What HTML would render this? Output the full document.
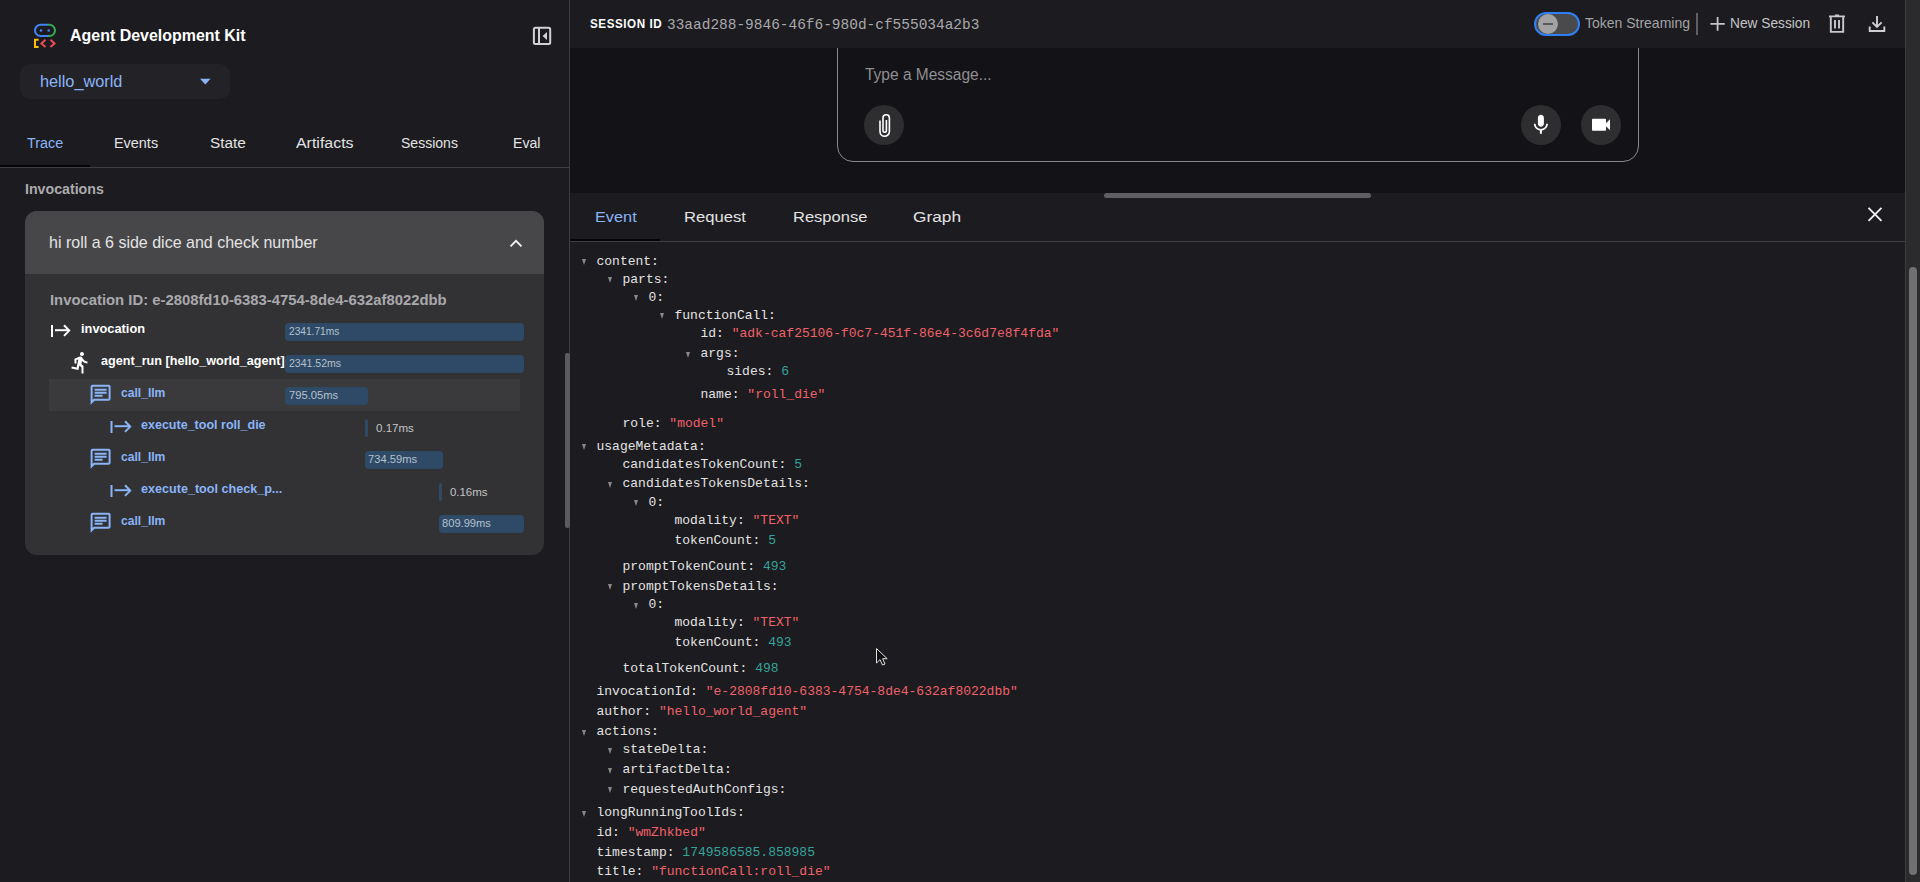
<!DOCTYPE html>
<html><head><meta charset="utf-8">
<style>
*{box-sizing:border-box;margin:0;padding:0}
html,body{width:1920px;height:882px;overflow:hidden;background:#1c1b1f;font-family:"Liberation Sans",sans-serif;color:#e3e3e3}
.a{position:absolute}
.t{position:absolute;white-space:nowrap;line-height:1;transform-origin:0 0}
.jl{font-family:"Liberation Mono",monospace;font-size:13px}
.tri{position:absolute;width:0;height:0;border-left:2.6px solid transparent;border-right:2.6px solid transparent;border-top:6px solid #8a8a8c}
.bar{position:absolute;height:18px;background:#2e4a66;border-radius:4px}
svg{position:absolute;overflow:visible}
</style></head><body>
<!-- sidebar -->
<div class="a" style="left:0;top:0;width:570px;height:882px;background:#1c1b1f"></div>
<div class="a" style="left:569px;top:0;width:1px;height:882px;background:#3c3b40"></div>
<!-- logo -->
<svg style="left:0;top:0" width="60" height="52">
  <defs>
    <clipPath id="lc"><rect x="0" y="0" width="48" height="40"/></clipPath>
    <clipPath id="rc"><rect x="48" y="0" width="20" height="40"/></clipPath>
  </defs>
  <rect x="35" y="24.8" width="20" height="11.2" rx="5.6" fill="none" stroke="#4285f4" stroke-width="2" clip-path="url(#lc)"/>
  <rect x="35" y="24.8" width="20" height="11.2" rx="5.6" fill="none" stroke="#34a853" stroke-width="2" clip-path="url(#rc)"/>
  <circle cx="41" cy="30.5" r="1.3" fill="#4285f4"/>
  <circle cx="48.7" cy="30.5" r="1.3" fill="#4285f4"/>
  <path d="M38.6 39.8H35V47H38.6" fill="none" stroke="#fbbc04" stroke-width="2"/>
  <path d="M45.5 39.8L41.4 43.4L45.5 47" fill="none" stroke="#ea4d55" stroke-width="2"/>
  <path d="M50.4 39.8L54.5 43.4L50.4 47" fill="none" stroke="#ea4d55" stroke-width="2"/>
</svg>
<!-- collapse icon -->
<svg style="left:0;top:0" width="560" height="50">
  <rect x="533.9" y="27.7" width="16.3" height="16.3" rx="1.5" fill="none" stroke="#d2d2d4" stroke-width="2"/>
  <rect x="538" y="27.7" width="2" height="16.3" fill="#d2d2d4"/>
  <path d="M547 32L542.6 36L547 40Z" fill="#d2d2d4"/>
</svg>
<!-- select -->
<div class="a" style="left:20px;top:64px;width:210px;height:35px;background:#232226;border-radius:10px"></div>
<svg style="left:0;top:0" width="230" height="100"><path d="M200 78.8H210.6L205.3 84.4Z" fill="#8ab4f8"/></svg>
<!-- tabs -->
<div class="a" style="left:0;top:167px;width:569px;height:1px;background:#3f3e43"></div>
<div class="a" style="left:0;top:165px;width:90px;height:2px;background:#050505"></div>
<!-- card -->
<div class="a" style="left:25px;top:211px;width:519px;height:344px;background:#323235;border-radius:12px;overflow:hidden">
  <div class="a" style="left:0;top:0;width:519px;height:63px;background:#47474a"></div>
  <div class="a" style="left:23.5px;top:168px;width:471.5px;height:32px;background:#3a3a3d"></div>
</div>
<svg style="left:0;top:0" width="560" height="300"><path d="M510.5 246.3L516 240.8L521.5 246.3" fill="none" stroke="#f2f2f2" stroke-width="1.9"/></svg>
<!-- tree icons -->
<svg style="left:0;top:0" width="300" height="560">
  <g fill="#ffffff">
    <rect x="51" y="325" width="2" height="12"/>
    <path d="M55 330.2H69" stroke="#fff" stroke-width="2" fill="none"/>
    <path d="M64 325.3L69.2 330.6L64 335.9" stroke="#fff" stroke-width="2" fill="none"/>
  </g>
  <g transform="translate(68.5,350.5)" fill="#fff"><path d="M13.49 5.48c1.1 0 2-.9 2-2s-.9-2-2-2-2 .9-2 2 .9 2 2 2zm-3.6 13.9l1-4.4 2.1 2v6h2v-7.5l-2.1-2 .6-3c1.3 1.5 3.3 2.5 5.5 2.5v-2c-1.9 0-3.5-1-4.3-2.4l-1-1.6c-.4-.6-1-1-1.7-1-.3 0-.5.1-.8.1l-5.2 2.2v4.7h2v-3.4l1.8-.7-1.6 8.1-4.9-1-.4 2 7 1.4z"/></g>
  <g id="chat" fill="#8ab4f8">
   <g transform="translate(88.6,382.7)"><path d="M4 4h16v12H5.17L4 17.17V4m0-2c-1.1 0-1.99.9-1.99 2L2 22l4-4h14c1.1 0 2-.9 2-2V4c0-1.1-.9-2-2-2H4zm2 10h8v2H6v-2zm0-3h12v2H6V9zm0-3h12v2H6V6z"/></g>
   <g transform="translate(88.6,446.7)"><path d="M4 4h16v12H5.17L4 17.17V4m0-2c-1.1 0-1.99.9-1.99 2L2 22l4-4h14c1.1 0 2-.9 2-2V4c0-1.1-.9-2-2-2H4zm2 10h8v2H6v-2zm0-3h12v2H6V9zm0-3h12v2H6V6z"/></g>
   <g transform="translate(88.6,510.7)"><path d="M4 4h16v12H5.17L4 17.17V4m0-2c-1.1 0-1.99.9-1.99 2L2 22l4-4h14c1.1 0 2-.9 2-2V4c0-1.1-.9-2-2-2H4zm2 10h8v2H6v-2zm0-3h12v2H6V9zm0-3h12v2H6V6z"/></g>
  </g>
  <g>
    <rect x="110.5" y="421" width="2" height="12" fill="#8ab4f8"/>
    <path d="M114.5 426.2H129.5" stroke="#8ab4f8" stroke-width="2" fill="none"/>
    <path d="M125 421.3L130.2 426.6L125 431.9" stroke="#8ab4f8" stroke-width="2" fill="none"/>
    <rect x="110.5" y="485" width="2" height="12" fill="#8ab4f8"/>
    <path d="M114.5 490.2H129.5" stroke="#8ab4f8" stroke-width="2" fill="none"/>
    <path d="M125 485.3L130.2 490.6L125 495.9" stroke="#8ab4f8" stroke-width="2" fill="none"/>
  </g>
</svg>
<!-- bars -->
<div class="bar" style="left:285px;top:323px;width:239px"></div>
<div class="bar" style="left:285px;top:355px;width:239px"></div>
<div class="bar" style="left:285px;top:387px;width:83px"></div>
<div class="bar" style="left:365px;top:419px;width:3px;border-radius:1.5px"></div>
<div class="bar" style="left:364.5px;top:451px;width:78px"></div>
<div class="bar" style="left:438.5px;top:483px;width:3px;border-radius:1.5px"></div>
<div class="bar" style="left:438.5px;top:515px;width:85.5px"></div>
<!-- sidebar scrollbar -->
<div class="a" style="left:565px;top:353px;width:4.5px;height:175px;background:#5b5b5e;border-radius:2px"></div>

<!-- main -->
<div class="a" style="left:570px;top:48px;width:1335px;height:145px;background:#131216"></div>
<div class="a" style="left:570px;top:0;width:1335px;height:48px;background:#1c1b1f"></div>
<!-- chat input box -->
<div class="a" style="left:836.9px;top:20px;width:801.8px;height:142px;border:1.3px solid #8a8a8d;border-radius:16px;background:#131216"></div>
<div class="a" style="left:570px;top:0;width:1335px;height:48px;background:#1c1b1f"></div>
<div class="a" style="left:864px;top:105px;width:40px;height:40px;border-radius:50%;background:#2e2e31"></div>
<div class="a" style="left:1521px;top:105px;width:40px;height:40px;border-radius:50%;background:#2e2e31"></div>
<div class="a" style="left:1581px;top:105px;width:40px;height:40px;border-radius:50%;background:#2e2e31"></div>
<svg style="left:0;top:0" width="1700" height="160">
  <!-- paperclip -->
  <path d="M880 120.5V131.5a4.7 4.7 0 0 0 9.4 0V118a3.2 3.2 0 0 0 -6.4 0V130.5a1.7 1.7 0 0 0 3.4 0V120" fill="none" stroke="#fff" stroke-width="1.6"/>
  <!-- mic -->
  <g transform="translate(1528.9,112.8)" fill="#fff"><path d="M12 14c1.66 0 2.99-1.34 2.99-3L15 5c0-1.66-1.34-3-3-3S9 3.34 9 5v6c0 1.66 1.34 3 3 3zm5.3-3c0 3-2.54 5.1-5.3 5.1S6.7 14 6.7 11H5c0 3.41 2.72 6.23 6 6.72V21h2v-3.28c3.28-.48 6-3.3 6-6.72h-1.7z"/></g>
  <!-- videocam -->
  <g transform="translate(1589,112.8)" fill="#fff"><path d="M17 10.5V7c0-.55-.45-1-1-1H4c-.55 0-1 .45-1 1v10c0 .55.45 1 1 1h12c.55 0 1-.45 1-1v-3.5l4 4v-11l-4 4z"/></g>
</svg>
<!-- top bar right -->
<div class="a" style="left:1534px;top:12px;width:46px;height:24px;border-radius:12px;background:#4a4a4d;border:2px solid #2f80f5"></div>
<div class="a" style="left:1537.8px;top:13.9px;width:20.4px;height:20.4px;border-radius:50%;background:#a2a2a4"></div>
<div class="a" style="left:1543px;top:23px;width:10px;height:2px;background:#5a5a5c"></div>
<div class="a" style="left:1696px;top:13px;width:2px;height:22px;background:#5f5f62"></div>
<svg style="left:0;top:0" width="1900" height="48">
  <path d="M1717.6 17V30.8M1710.4 23.9H1724.8" stroke="#c4c4c6" stroke-width="1.8" fill="none"/>
  <!-- trash -->
  <g fill="none" stroke="#c9c9cb" stroke-width="1.9">
    <path d="M1829 16.4H1845M1835 15.5H1839"/>
    <path d="M1830.8 17V31.9H1843.2V17"/>
    <path d="M1835 20V28.5M1839 20V28.5"/>
  </g>
  <!-- download -->
  <g fill="none" stroke="#d0d0d2" stroke-width="1.9">
    <path d="M1877 16V27M1872.4 22.4L1877 27L1881.6 22.4"/>
    <path d="M1869.7 26.5V31H1884.3V26.5"/>
  </g>
</svg>

<!-- event panel -->
<div class="a" style="left:570px;top:193px;width:1335px;height:689px;background:#1c1b1f"></div>
<div class="a" style="left:1104px;top:193px;width:267px;height:5px;border-radius:3px;background:#5f5f62"></div>
<div class="a" style="left:570px;top:241px;width:1335px;height:1px;background:#3f3e43"></div>
<div class="a" style="left:570px;top:239px;width:90px;height:2px;background:#050505"></div>
<svg style="left:0;top:0" width="1900" height="240">
  <path d="M1868.5 207.8L1881.5 220.8M1881.5 207.8L1868.5 220.8" stroke="#f0f0f0" stroke-width="1.9"/>
</svg>
<!-- right scrollbar -->
<div class="a" style="left:1905px;top:0;width:15px;height:882px;background:#2b2a2d;border-left:1px solid #3c3b40"></div>
<div class="a" style="left:1909px;top:267px;width:8.3px;height:608px;border-radius:4px;background:#707073"></div>
<!-- cursor -->
<svg style="left:0;top:0" width="900" height="680">
  <path d="M876.5 648.5V663L880 659.6L882.5 665L885 664L882.6 658.7H887.2Z" fill="#111" stroke="#e0e0e0" stroke-width="1"/>
</svg>
<div class="t" id="tx0" style="left:70.00px;top:27.92px;font-family:'Liberation Sans',sans-serif;font-size:16.8px;color:#ffffff;font-weight:700;transform:scaleX(0.9511)">Agent Development Kit</div>
<div class="t" id="tx1" style="left:40.00px;top:72.86px;font-family:'Liberation Sans',sans-serif;font-size:16.4px;color:#8ab4f8;font-weight:400;transform:scaleX(0.9938)">hello_world</div>
<div class="t" id="tx2" style="left:27.30px;top:134.82px;font-family:'Liberation Sans',sans-serif;font-size:15.5px;color:#8ab4f8;font-weight:400;transform:scaleX(0.9263)">Trace</div>
<div class="t" id="tx3" style="left:114.30px;top:134.82px;font-family:'Liberation Sans',sans-serif;font-size:15.5px;color:#e3e3e3;font-weight:400;transform:scaleX(0.9304)">Events</div>
<div class="t" id="tx4" style="left:209.50px;top:134.82px;font-family:'Liberation Sans',sans-serif;font-size:15.5px;color:#e3e3e3;font-weight:400;transform:scaleX(0.9912)">State</div>
<div class="t" id="tx5" style="left:295.90px;top:134.82px;font-family:'Liberation Sans',sans-serif;font-size:15.5px;color:#e3e3e3;font-weight:400;transform:scaleX(1.0273)">Artifacts</div>
<div class="t" id="tx6" style="left:401.00px;top:134.82px;font-family:'Liberation Sans',sans-serif;font-size:15.5px;color:#e3e3e3;font-weight:400;transform:scaleX(0.9048)">Sessions</div>
<div class="t" id="tx7" style="left:513.30px;top:134.82px;font-family:'Liberation Sans',sans-serif;font-size:15.5px;color:#e3e3e3;font-weight:400;transform:scaleX(0.9103)">Eval</div>
<div class="t" id="tx8" style="left:25.00px;top:182.43px;font-family:'Liberation Sans',sans-serif;font-size:14.2px;color:#ababad;font-weight:700">Invocations</div>
<div class="t" id="tx9" style="left:49.20px;top:234.35px;font-family:'Liberation Sans',sans-serif;font-size:17px;color:#e3e3e3;font-weight:400;transform:scaleX(0.9414)">hi roll a 6 side dice and check number</div>
<div class="t" id="tx10" style="left:49.50px;top:292.68px;font-family:'Liberation Sans',sans-serif;font-size:14.5px;color:#a9a9ab;font-weight:700;transform:scaleX(1.0230)">Invocation ID: e-2808fd10-6383-4754-8de4-632af8022dbb</div>
<div class="t" id="tx11" style="left:81.20px;top:322.02px;font-family:'Liberation Sans',sans-serif;font-size:13.5px;color:#ffffff;font-weight:700;transform:scaleX(0.9485)">invocation</div>
<div class="t" id="tx12" style="left:100.80px;top:354.02px;font-family:'Liberation Sans',sans-serif;font-size:13.5px;color:#ffffff;font-weight:700;transform:scaleX(0.9347)">agent_run [hello_world_agent]</div>
<div class="t" id="tx13" style="left:121.10px;top:386.02px;font-family:'Liberation Sans',sans-serif;font-size:13.5px;color:#8ab4f8;font-weight:700;transform:scaleX(0.8959)">call_llm</div>
<div class="t" id="tx14" style="left:141.00px;top:418.02px;font-family:'Liberation Sans',sans-serif;font-size:13.5px;color:#8ab4f8;font-weight:700;transform:scaleX(0.9276)">execute_tool roll_die</div>
<div class="t" id="tx15" style="left:121.10px;top:450.02px;font-family:'Liberation Sans',sans-serif;font-size:13.5px;color:#8ab4f8;font-weight:700;transform:scaleX(0.8959)">call_llm</div>
<div class="t" id="tx16" style="left:141.00px;top:482.02px;font-family:'Liberation Sans',sans-serif;font-size:13.5px;color:#8ab4f8;font-weight:700;transform:scaleX(0.9325)">execute_tool check_p...</div>
<div class="t" id="tx17" style="left:121.10px;top:514.02px;font-family:'Liberation Sans',sans-serif;font-size:13.5px;color:#8ab4f8;font-weight:700;transform:scaleX(0.8959)">call_llm</div>
<div class="t" id="tx18" style="left:288.60px;top:326.00px;font-family:'Liberation Sans',sans-serif;font-size:11.3px;color:#b6c1cd;font-weight:400;transform:scaleX(0.9000)">2341.71ms</div>
<div class="t" id="tx19" style="left:288.60px;top:358.00px;font-family:'Liberation Sans',sans-serif;font-size:11.3px;color:#b6c1cd;font-weight:400;transform:scaleX(0.9327)">2341.52ms</div>
<div class="t" id="tx20" style="left:288.60px;top:390.00px;font-family:'Liberation Sans',sans-serif;font-size:11.3px;color:#b6c1cd;font-weight:400;transform:scaleX(0.9918)">795.05ms</div>
<div class="t" id="tx21" style="left:376.40px;top:422.50px;font-family:'Liberation Sans',sans-serif;font-size:11.3px;color:#c4c4c6;font-weight:400;transform:scaleX(1.0222)">0.17ms</div>
<div class="t" id="tx22" style="left:368.10px;top:454.00px;font-family:'Liberation Sans',sans-serif;font-size:11.3px;color:#b6c1cd;font-weight:400;transform:scaleX(0.9896)">734.59ms</div>
<div class="t" id="tx23" style="left:449.90px;top:486.50px;font-family:'Liberation Sans',sans-serif;font-size:11.3px;color:#c4c4c6;font-weight:400;transform:scaleX(1.0108)">0.16ms</div>
<div class="t" id="tx24" style="left:442.10px;top:518.00px;font-family:'Liberation Sans',sans-serif;font-size:11.3px;color:#b6c1cd;font-weight:400;transform:scaleX(0.9857)">809.99ms</div>
<div class="t" id="tx25" style="left:590.10px;top:18.12px;font-family:'Liberation Sans',sans-serif;font-size:12.8px;color:#ffffff;font-weight:700;letter-spacing:0.6px;transform:scaleX(0.9104)">SESSION ID</div>
<div class="t" id="tx26" style="left:666.50px;top:17.56px;font-family:'Liberation Mono',monospace;font-size:14.4px;color:#a9a9ab;font-weight:400;transform:scaleX(1.0048)">33aad288-9846-46f6-980d-cf555034a2b3</div>
<div class="t" id="tx27" style="left:1584.50px;top:15.25px;font-family:'Liberation Sans',sans-serif;font-size:15px;color:#a3a3a5;font-weight:400;transform:scaleX(0.9324)">Token Streaming</div>
<div class="t" id="tx28" style="left:1730.20px;top:15.05px;font-family:'Liberation Sans',sans-serif;font-size:15px;color:#c4c4c6;font-weight:400;transform:scaleX(0.9151)">New Session</div>
<div class="t" id="tx29" style="left:865.00px;top:66.74px;font-family:'Liberation Sans',sans-serif;font-size:15.6px;color:#8f8f91;font-weight:400;transform:scaleX(0.9937)">Type a Message...</div>
<div class="t" id="tx30" style="left:594.60px;top:209.09px;font-family:'Liberation Sans',sans-serif;font-size:15.3px;color:#8ab4f8;font-weight:400;transform:scaleX(1.0658)">Event</div>
<div class="t" id="tx31" style="left:684.20px;top:209.09px;font-family:'Liberation Sans',sans-serif;font-size:15.3px;color:#e3e3e3;font-weight:400;transform:scaleX(1.0857)">Request</div>
<div class="t" id="tx32" style="left:793.00px;top:209.09px;font-family:'Liberation Sans',sans-serif;font-size:15.3px;color:#e3e3e3;font-weight:400;transform:scaleX(1.0791)">Response</div>
<div class="t" id="tx33" style="left:913.40px;top:209.09px;font-family:'Liberation Sans',sans-serif;font-size:15.3px;color:#e3e3e3;font-weight:400;transform:scaleX(1.1293)">Graph</div>
<div class="tri" style="left:582.1px;top:258.9px"></div>
<div class="t jl" style="left:596.5px;top:254.62px"><span style="color:#e3e3e3">content:</span></div>
<div class="tri" style="left:608.1px;top:277.2px"></div>
<div class="t jl" style="left:622.5px;top:272.92px"><span style="color:#e3e3e3">parts:</span></div>
<div class="tri" style="left:634.1px;top:295.4px"></div>
<div class="t jl" style="left:648.5px;top:290.72px"><span style="color:#e3e3e3">0:</span></div>
<div class="tri" style="left:660.1px;top:313.4px"></div>
<div class="t jl" style="left:674.5px;top:308.72px"><span style="color:#e3e3e3">functionCall:</span></div>
<div class="t jl" style="left:700.5px;top:326.92px"><span style="color:#e3e3e3">id:</span> <span style="color:#f0626a">"adk-caf25106-f0c7-451f-86e4-3c6d7e8f4fda"</span></div>
<div class="tri" style="left:686.1px;top:351.6px"></div>
<div class="t jl" style="left:700.5px;top:346.92px"><span style="color:#e3e3e3">args:</span></div>
<div class="t jl" style="left:726.5px;top:364.72px"><span style="color:#e3e3e3">sides:</span> <span style="color:#34a49c">6</span></div>
<div class="t jl" style="left:700.5px;top:387.72px"><span style="color:#e3e3e3">name:</span> <span style="color:#f0626a">"roll_die"</span></div>
<div class="t jl" style="left:622.5px;top:416.52px"><span style="color:#e3e3e3">role:</span> <span style="color:#f0626a">"model"</span></div>
<div class="tri" style="left:582.1px;top:443.9px"></div>
<div class="t jl" style="left:596.5px;top:439.62px"><span style="color:#e3e3e3">usageMetadata:</span></div>
<div class="t jl" style="left:622.5px;top:457.52px"><span style="color:#e3e3e3">candidatesTokenCount:</span> <span style="color:#34a49c">5</span></div>
<div class="tri" style="left:608.1px;top:482.1px"></div>
<div class="t jl" style="left:622.5px;top:477.42px"><span style="color:#e3e3e3">candidatesTokensDetails:</span></div>
<div class="tri" style="left:634.1px;top:500.3px"></div>
<div class="t jl" style="left:648.5px;top:495.62px"><span style="color:#e3e3e3">0:</span></div>
<div class="t jl" style="left:674.5px;top:513.72px"><span style="color:#e3e3e3">modality:</span> <span style="color:#f0626a">"TEXT"</span></div>
<div class="t jl" style="left:674.5px;top:533.72px"><span style="color:#e3e3e3">tokenCount:</span> <span style="color:#34a49c">5</span></div>
<div class="t jl" style="left:622.5px;top:559.72px"><span style="color:#e3e3e3">promptTokenCount:</span> <span style="color:#34a49c">493</span></div>
<div class="tri" style="left:608.1px;top:584.3px"></div>
<div class="t jl" style="left:622.5px;top:579.62px"><span style="color:#e3e3e3">promptTokensDetails:</span></div>
<div class="tri" style="left:634.1px;top:602.7px"></div>
<div class="t jl" style="left:648.5px;top:598.02px"><span style="color:#e3e3e3">0:</span></div>
<div class="t jl" style="left:674.5px;top:615.72px"><span style="color:#e3e3e3">modality:</span> <span style="color:#f0626a">"TEXT"</span></div>
<div class="t jl" style="left:674.5px;top:635.72px"><span style="color:#e3e3e3">tokenCount:</span> <span style="color:#34a49c">493</span></div>
<div class="t jl" style="left:622.5px;top:662.02px"><span style="color:#e3e3e3">totalTokenCount:</span> <span style="color:#34a49c">498</span></div>
<div class="t jl" style="left:596.5px;top:684.62px"><span style="color:#e3e3e3">invocationId:</span> <span style="color:#f0626a">"e-2808fd10-6383-4754-8de4-632af8022dbb"</span></div>
<div class="t jl" style="left:596.5px;top:704.52px"><span style="color:#e3e3e3">author:</span> <span style="color:#f0626a">"hello_world_agent"</span></div>
<div class="tri" style="left:582.1px;top:729.6px"></div>
<div class="t jl" style="left:596.5px;top:724.92px"><span style="color:#e3e3e3">actions:</span></div>
<div class="tri" style="left:608.1px;top:747.6px"></div>
<div class="t jl" style="left:622.5px;top:742.92px"><span style="color:#e3e3e3">stateDelta:</span></div>
<div class="tri" style="left:608.1px;top:767.6px"></div>
<div class="t jl" style="left:622.5px;top:762.92px"><span style="color:#e3e3e3">artifactDelta:</span></div>
<div class="tri" style="left:608.1px;top:787.2px"></div>
<div class="t jl" style="left:622.5px;top:782.52px"><span style="color:#e3e3e3">requestedAuthConfigs:</span></div>
<div class="tri" style="left:582.1px;top:810.5px"></div>
<div class="t jl" style="left:596.5px;top:805.82px"><span style="color:#e3e3e3">longRunningToolIds:</span></div>
<div class="t jl" style="left:596.5px;top:825.72px"><span style="color:#e3e3e3">id:</span> <span style="color:#f0626a">"wmZhkbed"</span></div>
<div class="t jl" style="left:596.5px;top:845.72px"><span style="color:#e3e3e3">timestamp:</span> <span style="color:#34a49c">1749586585.858985</span></div>
<div class="t jl" style="left:596.5px;top:865.32px"><span style="color:#e3e3e3">title:</span> <span style="color:#f0626a">"functionCall:roll_die"</span></div>
</body></html>
